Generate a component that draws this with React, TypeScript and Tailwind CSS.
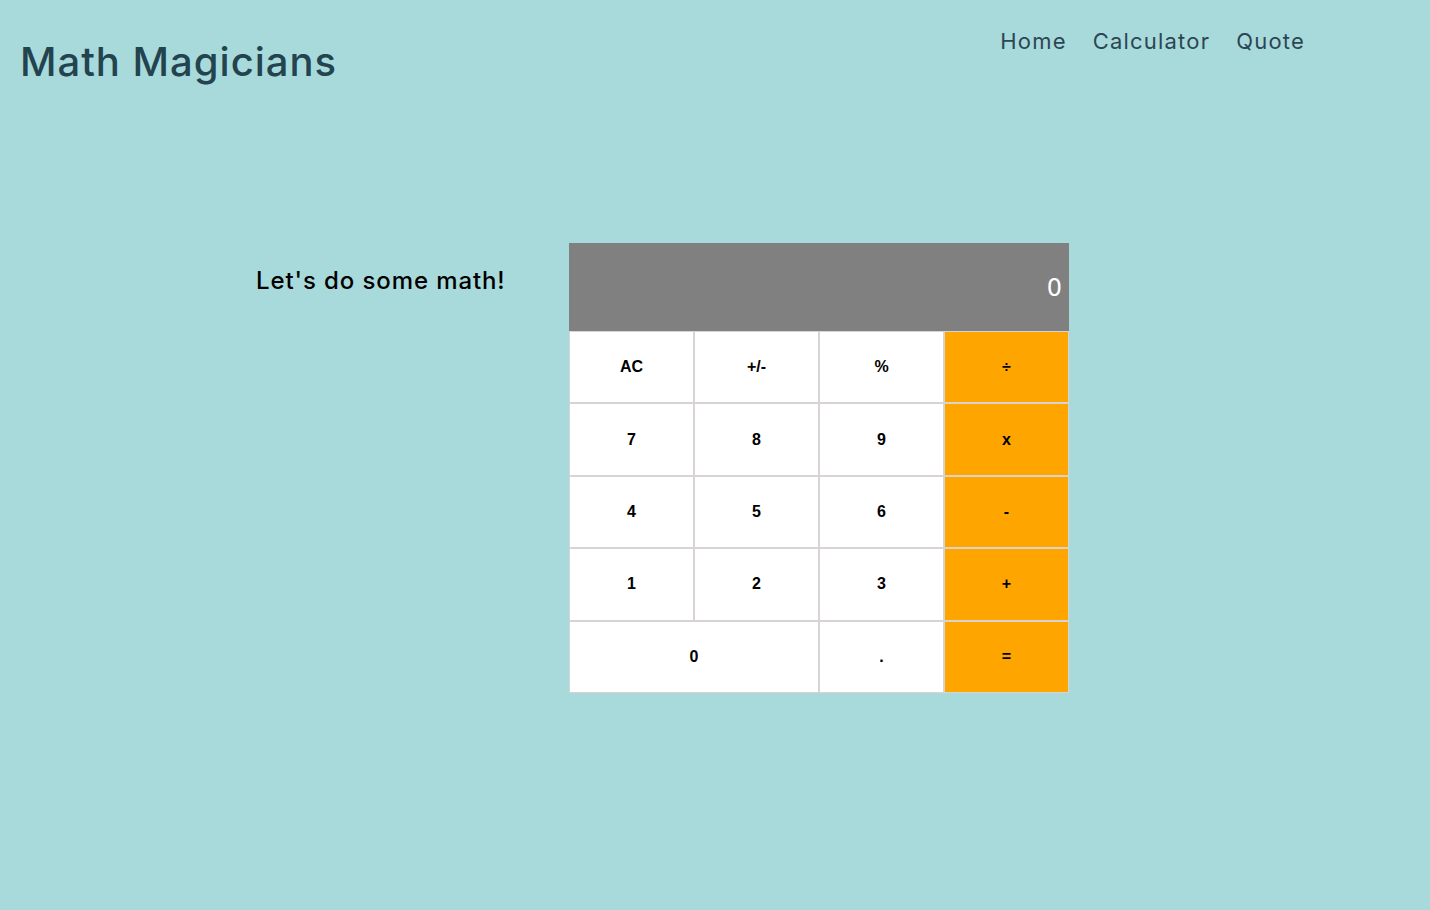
import React from 'react'

const rows: string[][] = [
  ['AC', '+/-', '%', '÷'],
  ['7', '8', '9', 'x'],
  ['4', '5', '6', '-'],
  ['1', '2', '3', '+'],
]

const Key = ({ label, orange, wide }: { label: string; orange?: boolean; wide?: boolean }) => (
  <button
    type="button"
    className={`h-[72.4px] border border-[#d8d4d4] text-[16px] font-bold text-black ${
      orange ? 'bg-[#ffa500]' : 'bg-white'
    } ${wide ? 'col-span-2' : ''}`}
    style={{ fontFamily: '"Liberation Sans", Arial, sans-serif' }}
  >
    {label}
  </button>
)

const Calculator = () => (
  <div className="w-[500px]">
    <div
      className="h-[88px] bg-[#808080] flex items-center justify-end px-[7px] pt-[2px] text-[24px] text-white"
      style={{ fontFamily: '"DejaVu Sans", sans-serif' }}
    >
      0
    </div>
    <div className="grid grid-cols-4">
      {rows.map((row) =>
        row.map((k, i) => <Key key={k} label={k} orange={i === 3} />),
      )}
      <Key label="0" wide />
      <Key label="." />
      <Key label="=" orange />
    </div>
  </div>
)

export default function App() {
  return (
    <div
      className="min-h-[910px] bg-[#a8dadc]"
      style={{ fontFamily: 'Inter, "Noto Sans", sans-serif' }}
    >
      <header className="flex items-start justify-between pl-[20px] pr-[125px]">
        <h1 className="mt-[36px] text-[40px] leading-[52px] font-medium text-[#23434f] tracking-[1px]">
          Math Magicians
        </h1>
        <nav className="mt-[26px] flex gap-[26px] text-[22px] leading-[30px] text-[#2c4653] tracking-[1.2px]">
          <a href="#">Home</a>
          <a href="#">Calculator</a>
          <a href="#">Quote</a>
        </nav>
      </header>
      <main className="mt-[155px] flex pl-[256px]">
        <div className="w-[313px] pt-[22px]">
          <p className="text-[24px] leading-[32px] font-medium text-black tracking-[0.9px]">
            Let's do some math!
          </p>
        </div>
        <Calculator />
      </main>
    </div>
  )
}
